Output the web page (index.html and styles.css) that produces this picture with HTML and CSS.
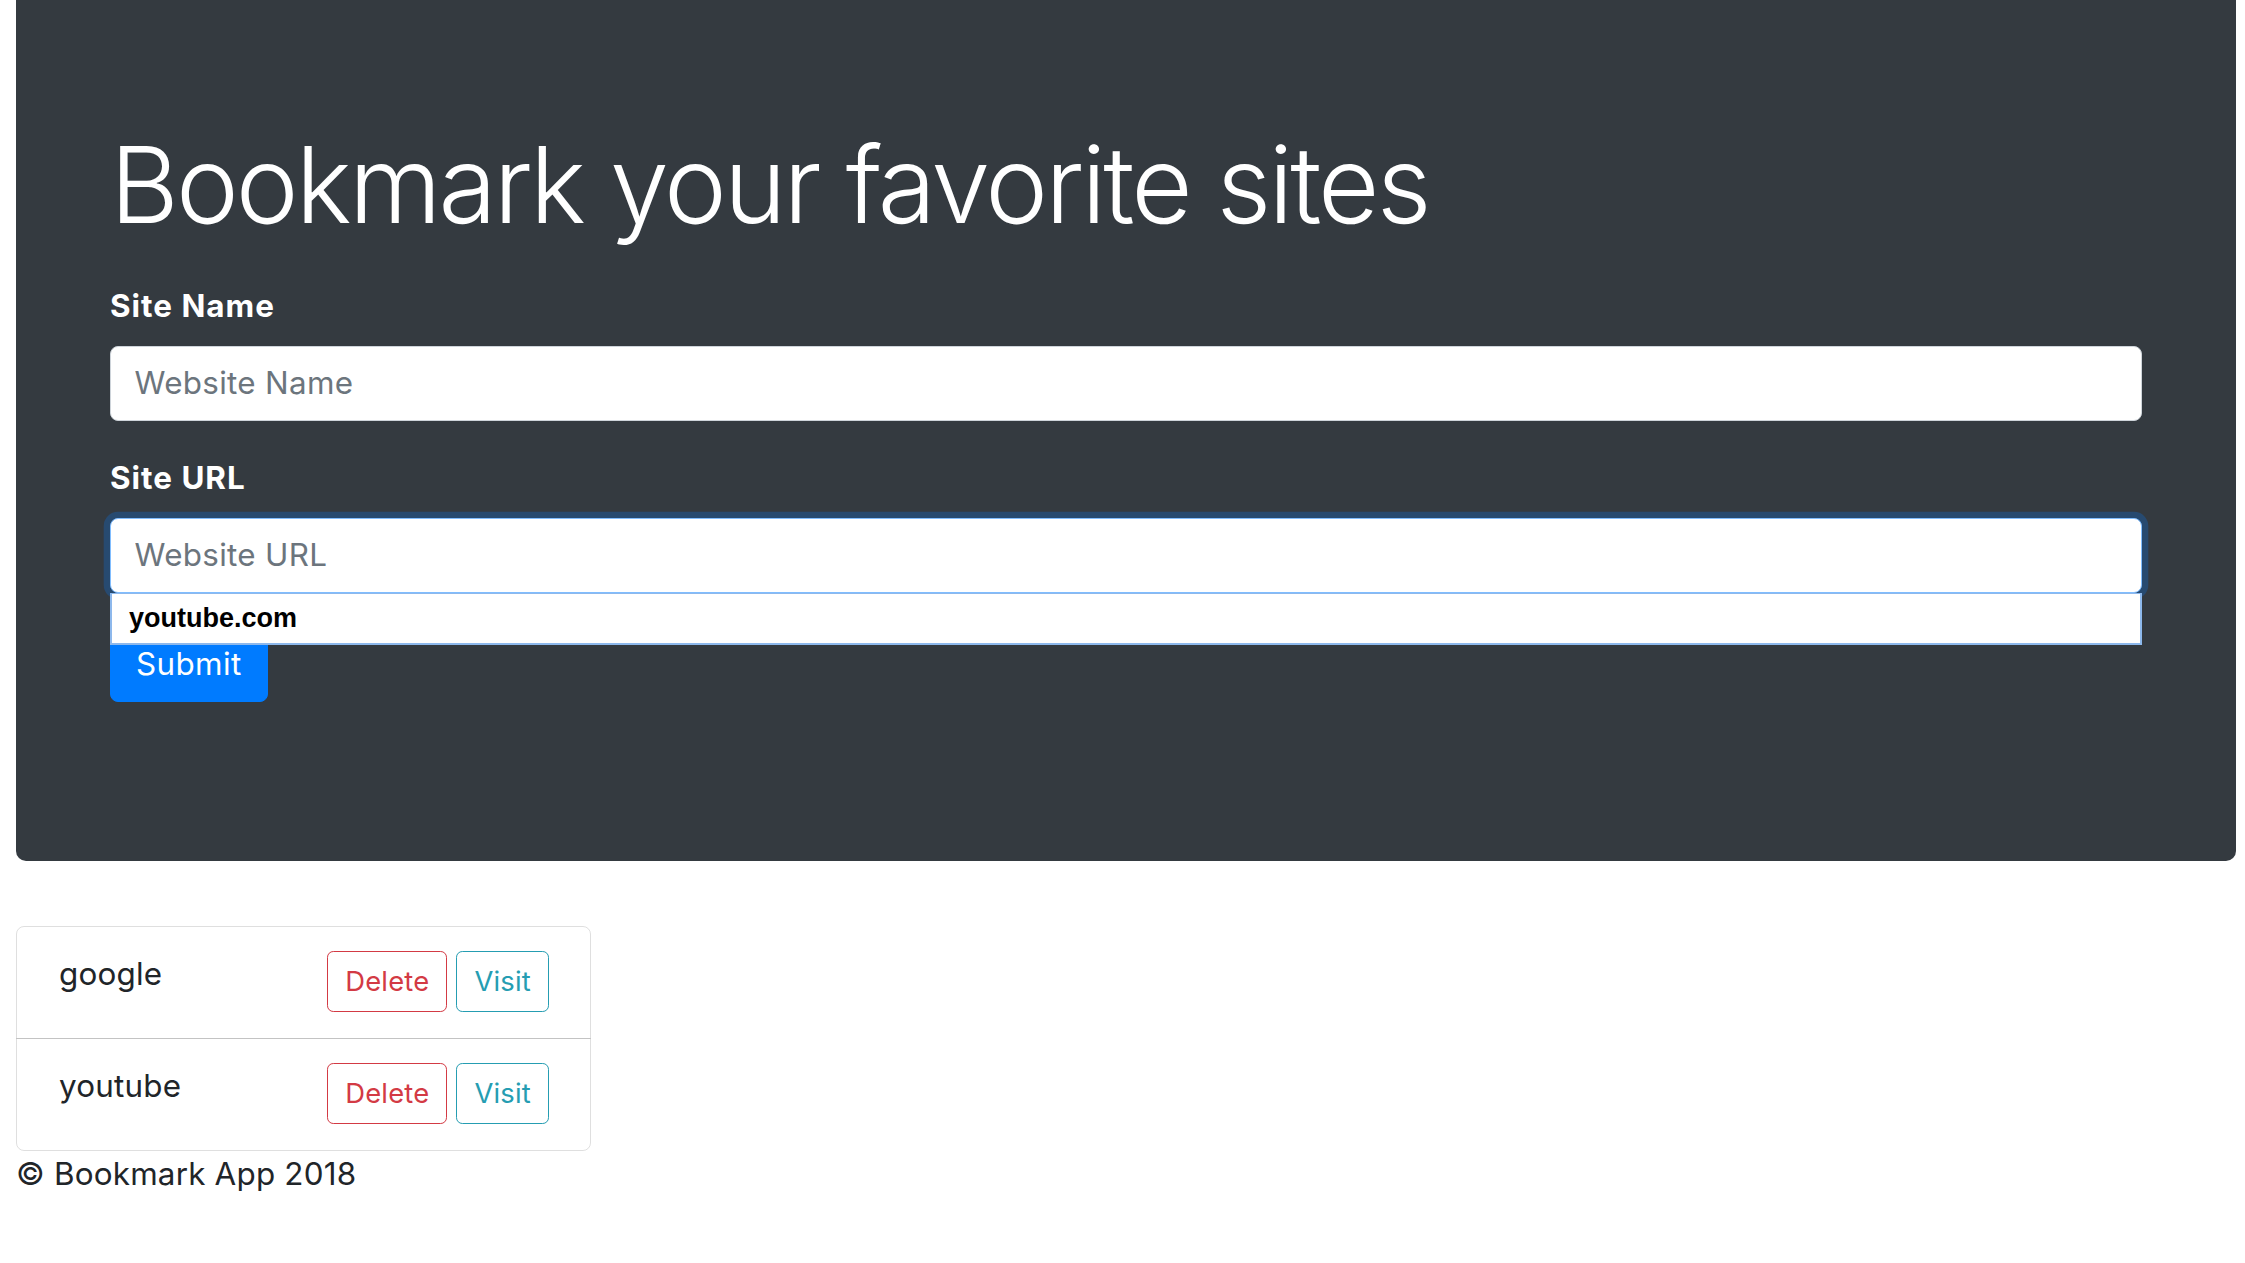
FILE: index.html
```html
<!DOCTYPE html>
<html lang="en">
<head>
<meta charset="utf-8">
<title>Bookmark App</title>
<link rel="stylesheet" href="styles.css">
</head>
<body>
<div class="page">
  <div class="jumbotron">
    <h1 class="display">Bookmark your favorite sites</h1>
    <form class="form">
      <div class="form-group">
        <label class="label">Site Name</label>
        <input class="input" type="text" placeholder="Website Name">
      </div>
      <div class="form-group">
        <label class="label">Site URL</label>
        <div class="input-wrap">
          <input class="input input-focus" type="text" placeholder="Website URL">
          <div class="autofill">youtube.com</div>
        </div>
      </div>
      <button class="btn-submit" type="button">Submit</button>
    </form>
  </div>
  <ul class="list">
    <li class="list-item">
      <span class="site">google</span>
      <div class="actions">
        <button class="btn-sm btn-danger" type="button">Delete</button>
        <button class="btn-sm btn-info" type="button">Visit</button>
      </div>
    </li>
    <li class="list-item">
      <span class="site">youtube</span>
      <div class="actions">
        <button class="btn-sm btn-danger" type="button">Delete</button>
        <button class="btn-sm btn-info" type="button">Visit</button>
      </div>
    </li>
  </ul>
  <footer class="footer">© Bookmark App 2018</footer>
</div>
</body>
</html>
```

FILE: styles.css
```css
* { box-sizing: border-box; }

html, body {
  margin: 0;
  padding: 0;
  background: #fff;
}

body {
  font-family: Inter, "Liberation Sans", sans-serif;
  font-size: 31.4px;
  line-height: 1.5;
  letter-spacing: 0.2px;
  color: #212529;
}

.page {
  padding: 0 9px 0 16px;
}

.jumbotron {
  background: #343a40;
  padding: 121px 94px 159px 94px;
  border-radius: 0 0 10px 10px;
  margin-bottom: 65px;
}

.display {
  margin: 0 0 35px 0;
  font-size: 106px;
  font-weight: 300;
  line-height: 1.2;
  color: #fff;
  letter-spacing: -2.9px;
}

.form { margin: 0; }

.form-group {
  margin-bottom: 34px;
}

.label {
  display: inline-block;
  margin-bottom: 15.7px;
  font-weight: 700;
  letter-spacing: 1px;
  color: #fff;
}

.input-wrap {
  position: relative;
}

.input {
  display: block;
  width: 100%;
  height: 75px;
  padding: 12px 23.5px;
  font-family: inherit;
  font-size: 31.4px;
  line-height: 1.5;
  letter-spacing: 0.3px;
  color: #495057;
  background: #fff;
  border: 1px solid #ced4da;
  border-radius: 8px;
  outline: none;
}

.input::placeholder {
  color: #6c757d;
}

.input-focus {
  border-color: #80bdff;
  box-shadow: 0 0 0 6.3px rgba(0, 123, 255, 0.25);
}

.autofill {
  position: absolute;
  top: 100%;
  left: 0;
  right: 0;
  height: 52px;
  display: flex;
  align-items: center;
  padding: 0 17px;
  background: #fff;
  border: 2px solid #8db8ec;
  border-top: 1px solid #8db8ec;
  font-family: "Liberation Sans", Arial, sans-serif;
  font-weight: 700;
  font-size: 27px;
  letter-spacing: 0;
  color: #000;
  z-index: 2;
}

.btn-submit {
  display: inline-block;
  height: 75px;
  padding: 12px 25px;
  font-family: inherit;
  font-size: 31.4px;
  line-height: 1.5;
  letter-spacing: 0.4px;
  color: #fff;
  background: #007bff;
  border: 1px solid #007bff;
  border-radius: 8px;
}

.list {
  list-style: none;
  margin: 0;
  padding: 0;
  width: 575px;
}

.list-item {
  display: flex;
  justify-content: space-between;
  align-items: flex-start;
  padding: 24px 41px 26px 42px;
  border: 1px solid rgba(0, 0, 0, 0.125);
}

.list-item:first-child {
  border-radius: 8px 8px 0 0;
}

.list-item:last-child {
  border-radius: 0 0 8px 8px;
}

.list-item + .list-item {
  margin-top: -1px;
}

.site {
  line-height: 47px;
}

.actions {
  display: flex;
  gap: 9px;
}

.btn-sm {
  height: 61px;
  padding: 0 17px;
  font-family: inherit;
  font-size: 27.4px;
  line-height: 1.5;
  letter-spacing: 0.2px;
  background: transparent;
  border: 1px solid;
  border-radius: 6.3px;
}

.btn-danger {
  color: #d33a44;
  border-color: #d33a44;
}

.btn-info {
  color: #259db2;
  border-color: #259db2;
}

.footer {
  line-height: 47px;
}
```
